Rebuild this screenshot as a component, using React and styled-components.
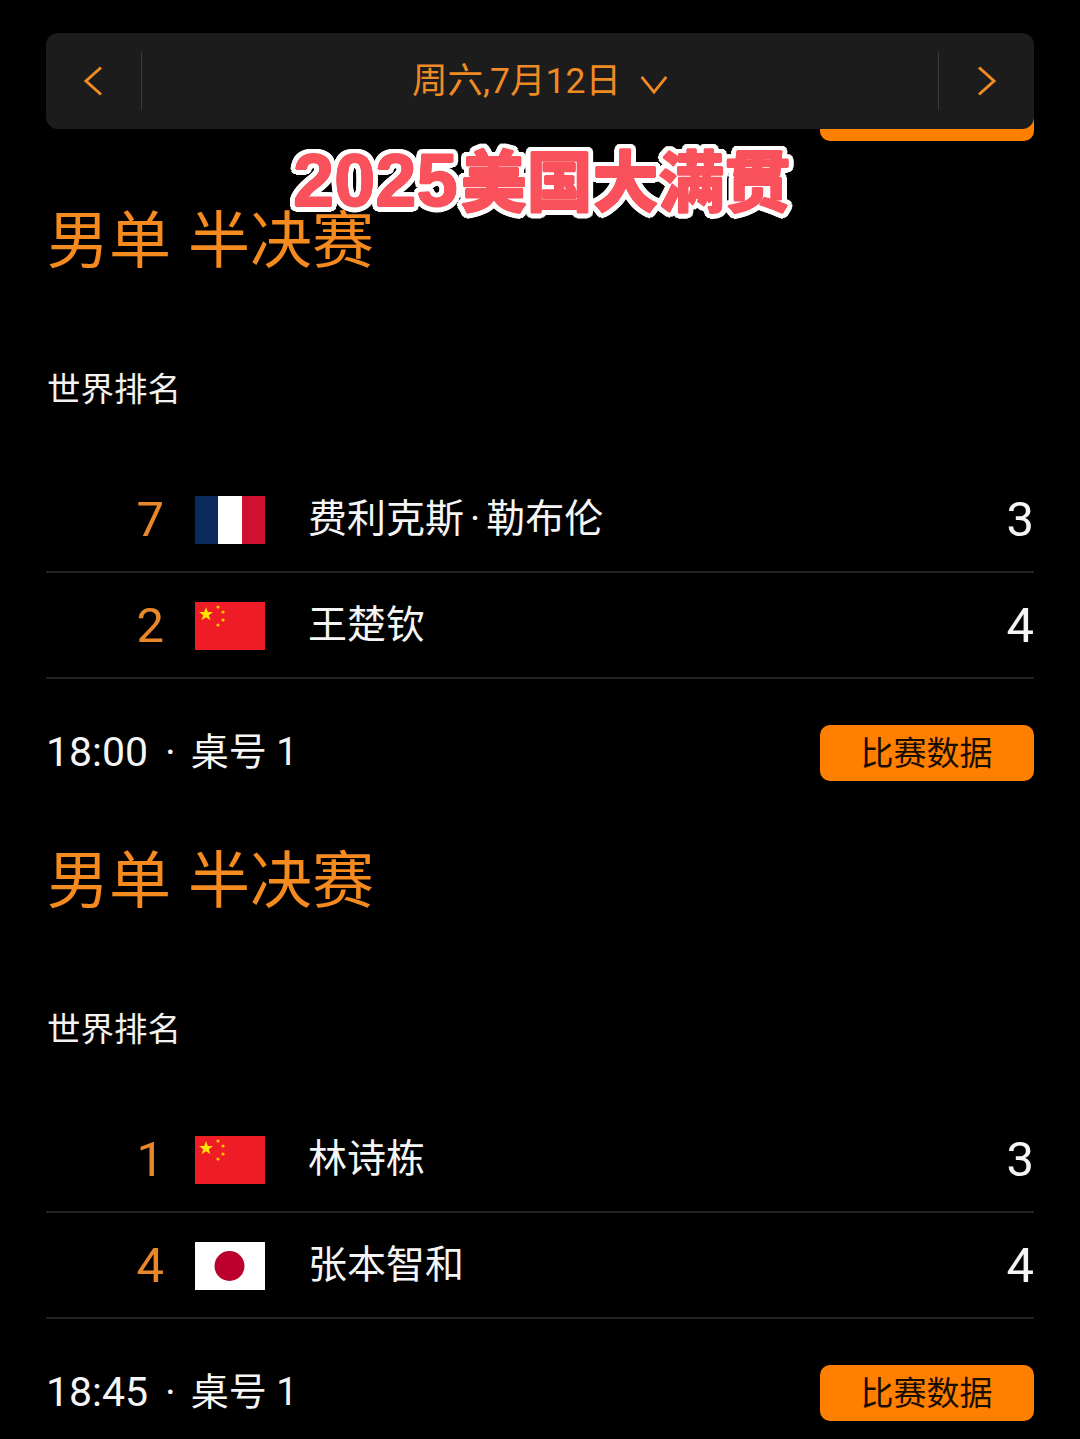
import styled, { createGlobalStyle } from "styled-components";

// round outline for the banner: offsets on a circle, first listed paints on top
const ring = (radius, color, steps) =>
  Array.from({ length: steps }, (_, i) => {
    const a = (i / steps) * Math.PI * 2;
    return `${(Math.cos(a) * radius).toFixed(2)}px ${(Math.sin(a) * radius).toFixed(2)}px 0 ${color}`;
  }).join(", ");

const bannerShadow = [ring(0.7, "#f9525c", 8), ring(5.5, "#fff", 24)].join(", ");

const Global = createGlobalStyle`
  html, body {
    margin: 0;
    background: #000;
  }
  body {
    font-family: Roboto, "Noto Sans CJK SC", sans-serif;
    overflow: hidden;
  }
`;

const Page = styled.div`
  position: relative;
  height: 1439px;
  overflow: hidden;
  padding: 85px 46px 0;
  box-sizing: border-box;
  background: #000;
`;

const DateBar = styled.header`
  position: absolute;
  top: 33px;
  left: 46px;
  right: 46px;
  height: 96px;
  display: grid;
  grid-template-columns: 96px 1fr 96px;
  align-items: center;
  background: #1c1c1c;
  border-radius: 12px;
  z-index: 1;
`;

const Arrow = styled.div`
  height: 58px;
  display: flex;
  align-items: center;
  justify-content: center;
  box-sizing: border-box;
  border-${(p) => (p.$right ? "left" : "right")}: 1px solid #3a3a3a;
  svg {
    display: block;
    margin-${(p) => (p.$right ? "left" : "right")}: ${(p) => (p.$right ? "0" : "2px")};
  }
`;

const DateLabel = styled.div`
  display: flex;
  align-items: center;
  justify-content: center;
  gap: 19px;
  color: #f08a24;
  font-size: 35.5px;
  font-weight: 400;
  line-height: 48px;
  svg {
    margin-top: 6px;
  }
`;

const Banner = styled.div`
  position: absolute;
  top: 131px;
  left: 293px;
  z-index: 2;
  font-family: "Noto Sans CJK SC", sans-serif;
  font-size: 66px;
  font-weight: 900;
  line-height: 92px;
  white-space: nowrap;
  color: #f9525c;
  text-shadow: ${bannerShadow};
`;

const BannerDigits = styled.span`
  font-family: "Liberation Sans", sans-serif;
  font-weight: 700;
  font-size: 74px;
  margin-right: 3px;
`;

const Match = styled.section`
  padding-top: 55px;
`;

const Title = styled.h2`
  margin: 0;
  padding-left: 1px;
  color: #f58a1f;
  font-family: "Noto Sans CJK SC", sans-serif;
  font-size: 62px;
  font-weight: 400;
  line-height: 80px;
  word-spacing: 3px;
`;

const RankLabel = styled.div`
  margin-top: 87px;
  padding-left: 1px;
  color: #f2f2f2;
  font-family: "Noto Sans CJK SC", sans-serif;
  font-size: 33.5px;
  font-weight: 400;
  line-height: 48px;
`;

const Rows = styled.div`
  margin-top: 56px;
`;

const Row = styled.div`
  height: 106px;
  box-sizing: border-box;
  display: grid;
  grid-template-columns: 118px 70px 1fr auto;
  align-items: center;
  border-bottom: 2px solid #222;
`;

const Seed = styled.span`
  color: #e8862a;
  font-size: 49px;
  font-weight: 400;
  line-height: 56px;
  text-align: right;
  margin-top: 2px;
`;

const Flag = styled.svg`
  display: block;
  grid-column: 2;
  margin: 2px 0 0 31px;
  width: 70px;
  height: 48px;
`;

const Name = styled.span`
  margin-left: 74px;
  margin-top: -8px;
  color: #f5f5f5;
  font-family: "Noto Sans CJK SC", sans-serif;
  font-size: 39px;
  font-weight: 400;
  line-height: 52px;
`;

const NameDot = styled.span`
  font-family: Roboto, sans-serif;
  line-height: 0;
  margin: 0 6px;
`;

const Score = styled.span`
  color: #f5f5f5;
  font-size: 49px;
  font-weight: 400;
  line-height: 56px;
  margin-top: 2px;
`;

const Footer = styled.div`
  height: 56px;
  display: flex;
  align-items: center;
  justify-content: space-between;
  margin-top: ${(p) => (p.$flush ? "0" : "46px")};
`;

const TimeInfo = styled.div`
  display: flex;
  align-items: center;
  color: #f5f5f5;
  font-size: 41px;
  font-weight: 400;
  line-height: 54px;
  margin-top: -2px;
`;

const Dot = styled.span`
  margin: 0 15px 0 17px;
`;

const Table = styled.span`
  font-size: 38px;
`;

const DataButton = styled.button`
  width: 214px;
  height: 56px;
  padding: 0 1px 5px 0;
  border: 0;
  border-radius: 10px;
  background: #ff8000;
  color: #1a0d00;
  font-family: "Noto Sans CJK SC", sans-serif;
  font-size: 33px;
  font-weight: 400;
  line-height: 46px;
`;

const ChinaFlag = () => (
  <Flag viewBox="0 0 70 48">
    <rect width="70" height="48" fill="#ee1c25" />
    <polygon
      fill="#ffe600"
      points="11,5 12.8,10 18,10 13.8,13.2 15.4,18.2 11,15.2 6.6,18.2 8.2,13.2 4,10 9.2,10"
    />
    <circle cx="23" cy="5" r="1.6" fill="#ffc400" />
    <circle cx="28" cy="10" r="1.6" fill="#ffc400" />
    <circle cx="28" cy="18" r="1.6" fill="#ffc400" />
    <circle cx="23" cy="23" r="1.6" fill="#ffc400" />
  </Flag>
);

const FranceFlag = () => (
  <Flag viewBox="0 0 70 48">
    <rect width="24" height="48" fill="#0b2a5c" />
    <rect x="23" width="24" height="48" fill="#fff" />
    <rect x="47" width="23" height="48" fill="#ce1130" />
  </Flag>
);

const JapanFlag = () => (
  <Flag viewBox="0 0 70 48">
    <rect width="70" height="48" fill="#fff" />
    <circle cx="34.5" cy="24" r="15" fill="#bc002d" />
  </Flag>
);

const matches = [
  {
    time: "18:00",
    players: [
      {
        seed: 7,
        flag: FranceFlag,
        name: (
          <>
            费利克斯<NameDot>·</NameDot>勒布伦
          </>
        ),
        score: 3,
      },
      { seed: 2, flag: ChinaFlag, name: "王楚钦", score: 4 },
    ],
  },
  {
    time: "18:45",
    players: [
      { seed: 1, flag: ChinaFlag, name: "林诗栋", score: 3 },
      { seed: 4, flag: JapanFlag, name: "张本智和", score: 4 },
    ],
  },
];

const MatchFooter = ({ time, flush }) => (
  <Footer $flush={flush}>
    <TimeInfo>
      {time}
      <Dot>·</Dot>
      <Table>桌号 1</Table>
    </TimeInfo>
    <DataButton>比赛数据</DataButton>
  </Footer>
);

const App = () => (
  <>
    <Global />
    <Page>
      <DateBar>
        <Arrow>
          <svg width="20" height="30" viewBox="0 0 20 30" fill="none" stroke="#f08a24" strokeWidth="3">
            <path d="M18 1.5 3 15l15 13.5" />
          </svg>
        </Arrow>
        <DateLabel>
          周六,7月12日
          <svg width="28" height="19" viewBox="0 0 29 20" fill="none" stroke="#f08a24" strokeWidth="3">
            <path d="M1.5 2 14.5 18 27.5 2" />
          </svg>
        </DateLabel>
        <Arrow $right>
          <svg width="20" height="30" viewBox="0 0 20 30" fill="none" stroke="#f08a24" strokeWidth="3">
            <path d="M2 1.5 17 15 2 28.5" />
          </svg>
        </Arrow>
      </DateBar>

      <Banner>
        <BannerDigits>2025</BannerDigits>美国大满贯
      </Banner>

      <MatchFooter time="17:15" flush />

      {matches.map((m) => (
        <Match key={m.time}>
          <Title>男单 半决赛</Title>
          <RankLabel>世界排名</RankLabel>
          <Rows>
            {m.players.map((p) => (
              <Row key={p.seed}>
                <Seed>{p.seed}</Seed>
                <p.flag />
                <Name>{p.name}</Name>
                <Score>{p.score}</Score>
              </Row>
            ))}
          </Rows>
          <MatchFooter time={m.time} />
        </Match>
      ))}
    </Page>
  </>
);

export default App;
